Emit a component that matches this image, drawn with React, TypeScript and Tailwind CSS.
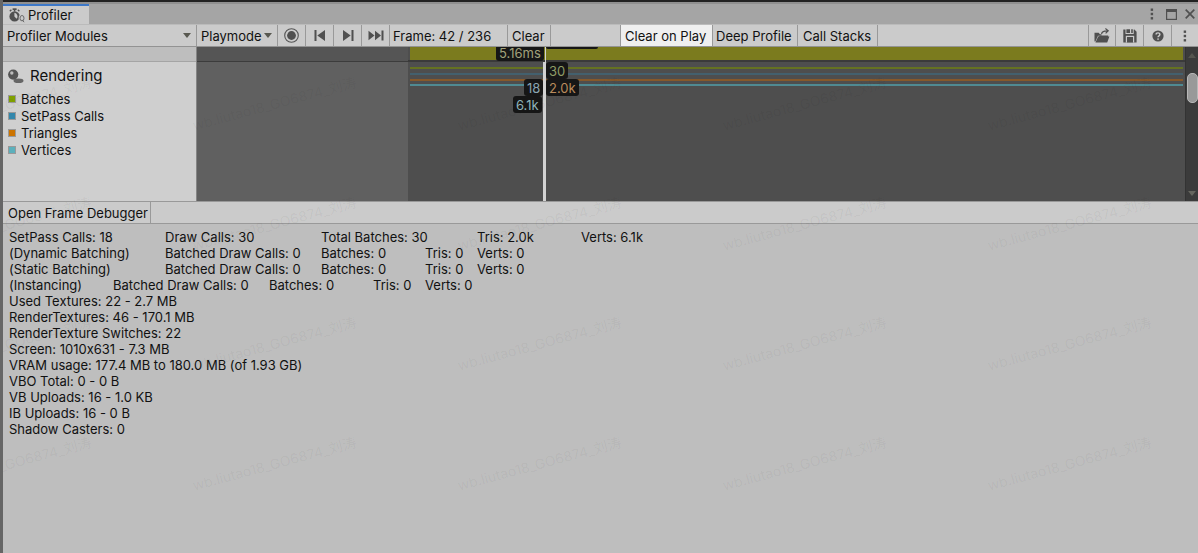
import React from "react";

const legend = [
  { name: "Batches", swatch: "bg-[#80a000]" },
  { name: "SetPass Calls", swatch: "bg-[#3488ac]" },
  { name: "Triangles", swatch: "bg-[#cc7400]" },
  { name: "Vertices", swatch: "bg-[#5cb0bc]" },
];

type Cell = [column: string, text: string];

const stats: Cell[][] = [
  [
    ["col-start-1", "SetPass Calls: 18"],
    ["col-start-4", "Draw Calls: 30"],
    ["col-start-7", "Total Batches: 30"],
    ["col-start-10", "Tris: 2.0k"],
    ["col-start-12", "Verts: 6.1k"],
  ],
  [
    ["col-start-1", "(Dynamic Batching)"],
    ["col-start-4", "Batched Draw Calls: 0"],
    ["col-start-7", "Batches: 0"],
    ["col-start-9", "Tris: 0"],
    ["col-start-10", "Verts: 0"],
  ],
  [
    ["col-start-1", "(Static Batching)"],
    ["col-start-4", "Batched Draw Calls: 0"],
    ["col-start-7", "Batches: 0"],
    ["col-start-9", "Tris: 0"],
    ["col-start-10", "Verts: 0"],
  ],
  [
    ["col-start-1", "(Instancing)"],
    ["col-start-3", "Batched Draw Calls: 0"],
    ["col-start-6", "Batches: 0"],
    ["col-start-8", "Tris: 0"],
    ["col-start-9", "Verts: 0"],
  ],
  [["col-start-1", "Used Textures: 22 - 2.7 MB"]],
  [["col-start-1", "RenderTextures: 46 - 170.1 MB"]],
  [["col-start-1", "RenderTexture Switches: 22"]],
  [["col-start-1", "Screen: 1010x631 - 7.3 MB"]],
  [["col-start-1", "VRAM usage: 177.4 MB to 180.0 MB (of 1.93 GB)"]],
  [["col-start-1", "VBO Total: 0 - 0 B"]],
  [["col-start-1", "VB Uploads: 16 - 1.0 KB"]],
  [["col-start-1", "IB Uploads: 16 - 0 B"]],
  [["col-start-1", "Shadow Casters: 0"]],
];

function ToolButton({
  label,
  className,
  children,
}: {
  label?: string;
  className: string;
  children: React.ReactNode;
}) {
  return (
    <button
      type="button"
      aria-label={label}
      className={`flex shrink-0 items-center whitespace-nowrap border-r border-[#999] ${
        label ? "justify-center" : "justify-start"
      } ${className}`}
    >
      {children}
    </button>
  );
}

function ToolSelect({ label, className, pad }: { label: string; className: string; pad: string }) {
  return (
    <div className={`relative flex shrink-0 items-center border-r border-[#999] ${className}`}>
      <select aria-label={label} className={`h-full w-full appearance-none bg-transparent outline-none ${pad}`}>
        <option>{label}</option>
      </select>
      <svg className="pointer-events-none absolute right-[5px] top-2 h-[5px] w-2" viewBox="0 0 8 5">
        <path d="M0 0h8L4 5z" fill="#585850" />
      </svg>
    </div>
  );
}

function Dots() {
  return (
    <svg width="4" height="12" viewBox="0 0 4 12" fill="#505050">
      <rect x="0.7" y="0.5" width="2.4" height="2.4" />
      <rect x="0.7" y="4.8" width="2.4" height="2.4" />
      <rect x="0.7" y="9.1" width="2.4" height="2.4" />
    </svg>
  );
}

function TabBar() {
  return (
    <div className="flex h-5 items-stretch justify-between bg-[#a5a5a5]">
      <div className="flex w-[86px] items-center gap-[3px] border-t-2 border-[#3d78c8] bg-[#cbcbcb] pl-1.5 text-[13px]">
        <svg width="16" height="15" viewBox="0 0 16 15">
          <rect x="3.6" y="0.3" width="4" height="1.8" fill="#505050" />
          <path d="M0.8 3.2l1.6-1.4M10.4 3.2L8.8 1.8M5.6 1.5v2" stroke="#505050" strokeWidth="1.4" />
          <circle cx="5.6" cy="8.4" r="5.2" fill="#505050" />
          <path d="M5.4 4.8v3.6l2.2 2.4A3.6 3.6 0 0 0 5.4 4.8z" fill="#cbcbcb" />
          <ellipse cx="12.8" cy="10.2" rx="3.1" ry="3.7" fill="#cbcbcb" />
          <ellipse cx="13" cy="10.2" rx="2" ry="2.7" fill="none" stroke="#6a6a6a" strokeWidth="1" />
          <path d="M13.2 11.8l1.9 2.4" stroke="#6a6a6a" strokeWidth="1" />
        </svg>
        Profiler
      </div>
      <div className="flex items-center gap-3 pr-[3px]">
        <button type="button" aria-label="Window menu">
          <Dots />
        </button>
        <button type="button" aria-label="Maximize">
          <svg width="11" height="11" viewBox="0 0 11 11">
            <rect x="0.6" y="0.6" width="9.8" height="9.8" fill="none" stroke="#505050" strokeWidth="1.2" />
            <rect x="0" y="0" width="11" height="3" fill="#505050" />
          </svg>
        </button>
        <button type="button" aria-label="Close" className="-ml-1">
          <svg width="10" height="10" viewBox="0 0 10 10">
            <path d="M0.7 0.7l8.6 8.6M9.3 0.7l-8.6 8.6" stroke="#505050" strokeWidth="1.7" />
          </svg>
        </button>
      </div>
    </div>
  );
}

function Toolbar() {
  return (
    <div className="flex h-[23px] items-stretch border-b border-t border-b-[#939393] border-t-[#bbb] bg-[#cbcbcb]">
      <ToolSelect label="Profiler Modules" className="w-[194px]" pad="pl-1" />
      <ToolSelect label="Playmode" className="w-[81px]" pad="pl-1" />
      <ToolButton label="Record" className="w-7">
        <svg width="15" height="15" viewBox="0 0 15 15">
          <circle cx="7.5" cy="7.5" r="6.8" fill="none" stroke="#555" strokeWidth="1.1" />
          <circle cx="7.5" cy="7.5" r="4.4" fill="#505050" />
        </svg>
      </ToolButton>
      <ToolButton label="Previous frame" className="w-7">
        <svg width="12" height="11" viewBox="0 0 12 11" fill="#505050">
          <path d="M0.5 0h2v11h-2zM11 0v11L3.3 5.5z" />
        </svg>
      </ToolButton>
      <ToolButton label="Next frame" className="w-7">
        <svg width="12" height="11" viewBox="0 0 12 11" fill="#505050">
          <path d="M9.5 0h2v11h-2zM1 0v11l7.7-5.5z" />
        </svg>
      </ToolButton>
      <ToolButton label="Current frame" className="w-7">
        <svg width="16" height="11" viewBox="0 0 16 11" fill="#505050">
          <path d="M0.5 0.8v9.4l6-4.7zM7 0.8v9.4l6-4.7zM13.5 0.5h2v10h-2z" />
        </svg>
      </ToolButton>
      <div className="flex w-[118px] shrink-0 items-center border-r border-[#999] pl-[3px]">Frame: 42 / 236</div>
      <ToolButton className="w-[43px] pl-1">Clear</ToolButton>
      <div className="w-[70px] shrink-0 border-r border-[#999]" />
      <ToolButton className="w-[92px] bg-[#efefef] pl-1">Clear on Play</ToolButton>
      <ToolButton className="w-[85px] pl-[3px]">Deep Profile</ToolButton>
      <ToolButton className="w-20 pl-[5px]">Call Stacks</ToolButton>
      <div className="min-w-0 flex-1 border-r border-[#999]" />
      <ToolButton label="Load" className="w-[27px]">
        <svg width="16" height="15" viewBox="0 0 16 15" fill="#505050">
          <path d="M0.5 13.5V4.8h4.2l1.2 1.4h1.6v1.6H4L1.4 13.5z" />
          <path d="M4.2 8.4l3.2-1h6.8v1h1.2l-2.2 6H1.4z" />
          <path d="M7.6 6C7.8 3.6 9.5 2.7 13.8 2.9M11.4 0.5l2.8 2.4-2.6 2.5" fill="none" stroke="#505050" strokeWidth="1.2" />
        </svg>
      </ToolButton>
      <ToolButton label="Save" className="w-7">
        <svg width="14" height="14" viewBox="0 0 14 14">
          <path d="M0.3 0.5h2.2v4.6h8.2V0.5h0.7l2.2 2.2v10.8H0.3z" fill="#505050" />
          <path d="M3.4 0.3h3.6v3.8H3.4zM8.2 0.3h1.6v3.8H8.2z" fill="#505050" />
          <path d="M2.8 6.8h8.4v6.7H2.8z" fill="#cbcbcb" />
          <path d="M4 8h6v5.5H4z" fill="#505050" />
        </svg>
      </ToolButton>
      <ToolButton label="Help" className="w-7">
        <svg width="12" height="12" viewBox="0 0 12 12">
          <circle cx="6" cy="6" r="5.6" fill="#505050" />
          <path d="M4.1 4.6c0-2.3 3.8-2.3 3.8 0C7.9 5.8 6 5.9 6 7.3" fill="none" stroke="#cbcbcb" strokeWidth="1.4" />
          <rect x="5.3" y="8.4" width="1.5" height="1.4" fill="#cbcbcb" />
        </svg>
      </ToolButton>
      <button type="button" aria-label="More options" className="flex w-[26px] shrink-0 items-center justify-center">
        <Dots />
      </button>
    </div>
  );
}

function ChartTag({ className, children }: { className: string; children: React.ReactNode }) {
  return (
    <span className={`absolute flex h-[17px] items-center rounded-[3px] bg-[#161616] px-[3px] text-[13px] ${className}`}>
      {children}
    </span>
  );
}

function Charts() {
  return (
    <div className="flex h-[154px] items-stretch">
      <div className="flex w-[194px] shrink-0 flex-col border-r border-[#858585] bg-[#cfcfcf]">
        <div className="h-[15px] border-b border-[#a5a5a5] bg-[#bebebe]" />
        <div className="flex items-center gap-1.5 pl-[5px] pt-1 text-[15px] leading-5">
          <svg width="16" height="15" viewBox="0 0 16 15">
            <ellipse cx="10.5" cy="11.8" rx="5" ry="2.3" fill="#666" />
            <circle cx="5.2" cy="5.6" r="5.1" fill="#545454" />
            <circle cx="3.8" cy="4" r="1.7" fill="#bcbcbc" />
          </svg>
          Rendering
        </div>
        <ul className="flex flex-col pl-[5px] pt-1">
          {legend.map((item) => (
            <li key={item.name} className="flex h-[17px] items-center gap-[5px]">
              <span className={`size-2 border border-[#999] ${item.swatch}`} />
              {item.name}
            </li>
          ))}
        </ul>
      </div>
      <div className="flex w-[211px] shrink-0 flex-col bg-[#606060]">
        <div className="h-[15px] border-b border-[#3c3c3c] bg-[#555]" />
      </div>
      <div className="relative min-w-0 flex-1 overflow-hidden bg-[#4e4e4e]">
        <div className="h-[15px] border-b-2 border-[#3a3a3a] px-[2px]">
          <div className="h-full bg-[#7b7b1e]" />
        </div>
        <div className="px-[2px] pt-[5px]">
          <svg className="block h-5 w-full" viewBox="0 0 100 20" preserveAspectRatio="none">
            <rect x="0" y="0" width="100" height="2" fill="#657221" />
            <rect x="0" y="6" width="100" height="2" fill="#43606e" />
            <rect x="0" y="12" width="100" height="2" fill="#86592b" />
            <rect x="0" y="17" width="100" height="2" fill="#4f8a92" />
          </svg>
        </div>
        <div className="absolute bottom-0 left-[135px] top-[15px] w-[3px] bg-[#d2d2d2]" />
        <div className="absolute left-[137px] top-0 h-[15px] w-px bg-[#d2d2d2]" />
        <div className="absolute left-[138px] top-0 h-[2px] w-[52px] rounded-b bg-[#161616]" />
        <ChartTag className="left-[88px] top-[-3px] text-[#a2a27c]">5.16ms</ChartTag>
        <ChartTag className="left-[138px] top-[15px] text-[#8f9c66]">30</ChartTag>
        <ChartTag className="left-[116px] top-8 text-[#8aa4b0]">18</ChartTag>
        <ChartTag className="left-[138px] top-8 text-[#b98b5c]">2.0k</ChartTag>
        <ChartTag className="left-[105px] top-[49px] text-[#8fb4ba]">6.1k</ChartTag>
      </div>
      <div className="flex w-[13px] shrink-0 flex-col items-end justify-between border-l border-[#333] bg-[#3b3b3b]">
        <div className="flex flex-col items-end gap-[15px] pt-[6px]">
          <svg width="9" height="5" viewBox="0 0 9 5" className="mr-px">
            <path d="M0 5h8L4 0z" fill="#55554f" />
          </svg>
          <div className="h-[30px] w-[11px] rounded-[5px] border border-[#b8b8b8] bg-[#999]" />
        </div>
        <svg width="9" height="5" viewBox="0 0 9 5" className="mb-[5px] mr-px">
          <path d="M0 0h8L4 5z" fill="#66665f" />
        </svg>
      </div>
    </div>
  );
}

function Watermark() {
  return (
    <div
      aria-hidden="true"
      className="pointer-events-none absolute inset-0 grid select-none auto-rows-[120px] grid-cols-[repeat(5,265px)] overflow-hidden pt-11 text-[14px] text-black/[0.05]"
    >
      {Array.from({ length: 20 }, (_, i) => (
        <div key={i} className="relative -left-[78px] flex items-center">
          <span className="-rotate-[15deg] whitespace-nowrap">wb.liutao18_GO6874_刘涛</span>
        </div>
      ))}
    </div>
  );
}

export default function App() {
  return (
    <main className="relative flex min-h-screen flex-col overflow-hidden border-l-[3px] border-[#666] bg-[#bebebe] font-['Inter','Noto_Sans_CJK_SC',sans-serif] text-[13px] leading-4 text-[#111] [font-feature-settings:'calt'_0]">
      <div className="h-1 border-b-2 border-b-[#909090] bg-[#222]" />
      <TabBar />
      <Toolbar />
      <Charts />
      <div className="flex h-[23px] items-stretch border-b border-t border-[#999] bg-[#cbcbcb]">
        <ToolButton className="w-[148px] pl-[5px]">Open Frame Debugger</ToolButton>
      </div>
      <div className="flex flex-col pl-1.5 pt-[5px]">
        {stats.map((row, i) => (
          <div key={i} className="grid grid-cols-[repeat(13,52px)] whitespace-nowrap">
            {row.map(([column, text]) => (
              <span key={column} className={`row-start-1 ${column}`}>
                {text}
              </span>
            ))}
          </div>
        ))}
      </div>
      <Watermark />
    </main>
  );
}
